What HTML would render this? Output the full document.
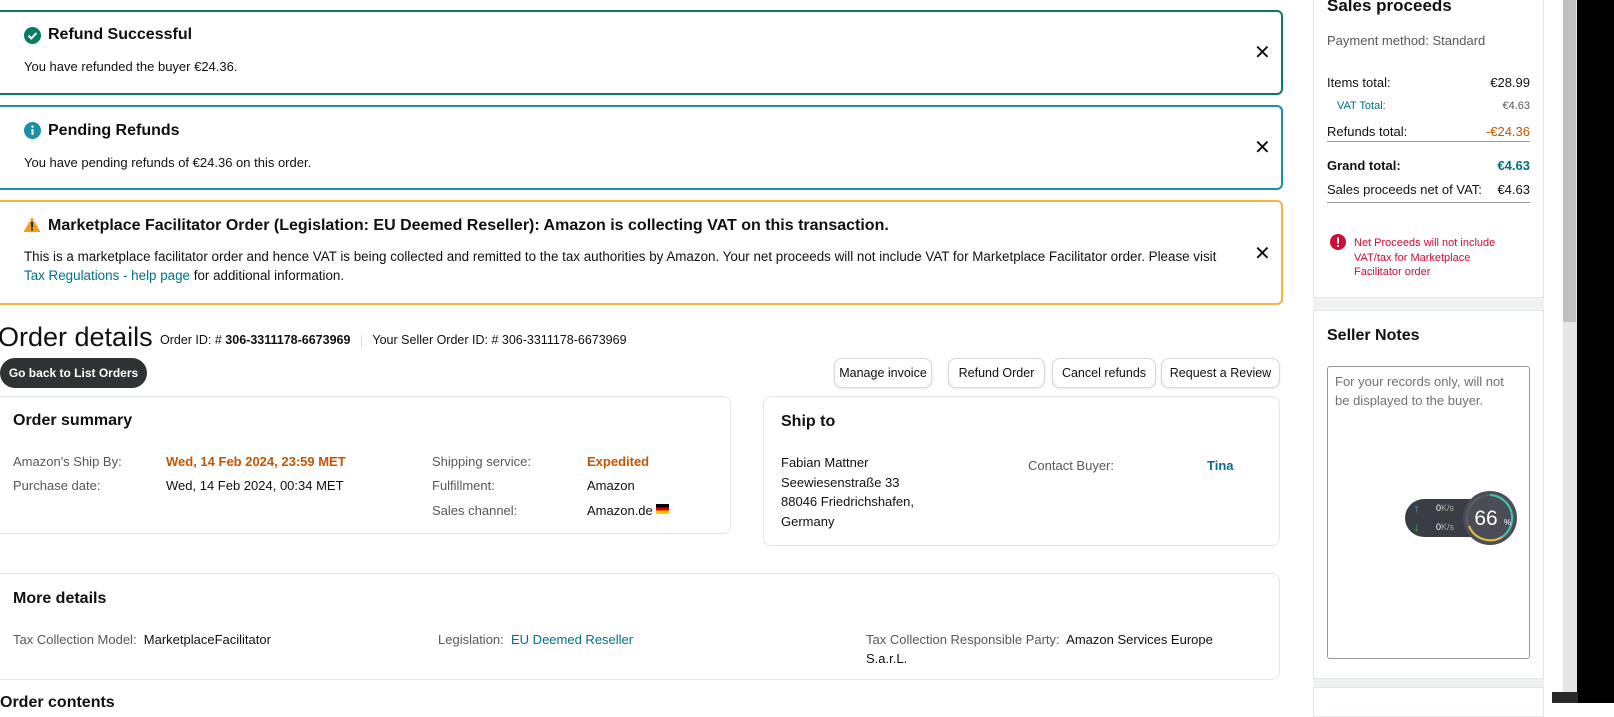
<!DOCTYPE html>
<html><head><meta charset="utf-8"><style>
*{box-sizing:border-box;margin:0;padding:0}
body{width:1614px;height:703px;overflow:hidden;background:#fff;font-family:"Liberation Sans",Arial,sans-serif;color:#0f1111;position:relative;font-size:13px}
.a{position:absolute;white-space:nowrap}
.ban{position:absolute;left:-8px;width:1291px;border:2px solid;border-left-width:8px;border-radius:6px;background:#fff}
.t{font-weight:bold;font-size:16px}
.x{position:absolute;font-size:20px;color:#0f1111}
.card{position:absolute;border:1px solid #e3e6e6;border-radius:8px;background:#fff}
.lbl{color:#565959}
.btn{position:absolute;top:358px;height:30px;border:1px solid #d5d9d9;border-radius:8px;background:#fff;font-size:12.5px;display:flex;align-items:center;justify-content:center;box-shadow:0 1px 2px rgba(15,17,17,.1)}
.teal{color:#007185}
</style></head><body>

<div class="ban" style="top:10px;height:85px;border-color:#067d62"></div>
<svg class="a" style="left:24px;top:27px" width="17" height="17" viewBox="0 0 17 17"><circle cx="8.5" cy="8.5" r="8.5" fill="#067d62"/><path d="M4.5 8.7l2.8 2.7 5.2-5.4" stroke="#fff" stroke-width="2" fill="none"/></svg>
<div class="a t" style="left:48px;top:26px">Refund Successful</div>
<div class="a" style="left:24px;top:59px">You have refunded the buyer €24.36.</div>
<div class="x a" style="left:1254px;top:40px">✕</div>

<div class="ban" style="top:105px;height:85px;border-color:#1c8ea6"></div>
<svg class="a" style="left:24px;top:122px" width="17" height="17" viewBox="0 0 17 17"><circle cx="8.5" cy="8.5" r="8.5" fill="#1c8ea6"/><rect x="7.5" y="7" width="2" height="6" fill="#fff"/><circle cx="8.5" cy="4.6" r="1.2" fill="#fff"/></svg>
<div class="a t" style="left:48px;top:122px">Pending Refunds</div>
<div class="a" style="left:24px;top:155px">You have pending refunds of €24.36 on this order.</div>
<div class="x a" style="left:1254px;top:135px">✕</div>

<div class="ban" style="top:200px;height:105px;border-color:#f9b340"></div>
<svg class="a" style="left:23px;top:216px" width="18" height="17" viewBox="0 0 18 17"><path d="M9 1L17.5 16H.5z" fill="#f0a020"/><rect x="8.1" y="6" width="1.8" height="5.5" fill="#111"/><rect x="8.1" y="12.6" width="1.8" height="1.8" fill="#111"/></svg>
<div class="a t" style="left:48px;top:217px">Marketplace Facilitator Order (Legislation: EU Deemed Reseller): Amazon is collecting VAT on this transaction.</div>
<div class="a" style="left:24px;top:249px;font-size:13.4px">This is a marketplace facilitator order and hence VAT is being collected and remitted to the tax authorities by Amazon. Your net proceeds will not include VAT for Marketplace Facilitator order. Please visit</div>
<div class="a" style="left:24px;top:268px;font-size:13.4px"><span class="teal">Tax Regulations - help page</span> for additional information.</div>
<div class="x a" style="left:1254px;top:241px">✕</div>

<div class="a" style="left:-2px;top:322px;font-size:27px">Order details</div>
<div class="a" style="left:160px;top:333px;font-size:12.5px">Order ID: # <b>306-3311178-6673969</b> <span style="color:#d5d9d9;margin:0 6px">|</span> Your Seller Order ID: # 306-3311178-6673969</div>
<div class="a" style="left:0;top:358px;width:147px;height:30px;background:#303333;color:#fff;border-radius:15px;font-weight:bold;font-size:12px;display:flex;align-items:center;justify-content:center">Go back to List Orders</div>
<div class="btn" style="left:834px;width:98px">Manage invoice</div>
<div class="btn" style="left:948px;width:97px">Refund Order</div>
<div class="btn" style="left:1052px;width:104px">Cancel refunds</div>
<div class="btn" style="left:1161px;width:119px">Request a Review</div>

<div class="card" style="left:-8px;top:396px;width:739px;height:138px"></div>
<div class="a t" style="left:13px;top:412px">Order summary</div>
<div class="a lbl" style="left:13px;top:454px">Amazon's Ship By:</div>
<div class="a" style="left:166px;top:454px;color:#c45500;font-weight:bold">Wed, 14 Feb 2024, 23:59 MET</div>
<div class="a lbl" style="left:13px;top:478px">Purchase date:</div>
<div class="a" style="left:166px;top:478px">Wed, 14 Feb 2024, 00:34 MET</div>
<div class="a lbl" style="left:432px;top:454px">Shipping service:</div>
<div class="a" style="left:587px;top:454px;color:#c45500;font-weight:bold">Expedited</div>
<div class="a lbl" style="left:432px;top:478px">Fulfillment:</div>
<div class="a" style="left:587px;top:478px">Amazon</div>
<div class="a lbl" style="left:432px;top:503px">Sales channel:</div>
<div class="a" style="left:587px;top:503px">Amazon.de <span style="display:inline-block;width:13px;height:10px;background:linear-gradient(#000 33%,#d00 33% 66%,#fc0 66%);vertical-align:1px"></span></div>

<div class="card" style="left:763px;top:396px;width:517px;height:150px"></div>
<div class="a t" style="left:781px;top:413px">Ship to</div>
<div class="a" style="left:781px;top:453px;line-height:19.5px">Fabian Mattner<br>Seewiesenstraße 33<br>88046 Friedrichshafen,<br>Germany</div>
<div class="a lbl" style="left:1028px;top:458px">Contact Buyer:</div>
<div class="a teal" style="left:1207px;top:458px;font-weight:bold">Tina</div>

<div class="card" style="left:-8px;top:573px;width:1288px;height:107px"></div>
<div class="a t" style="left:13px;top:590px">More details</div>
<div class="a" style="left:13px;top:632px"><span class="lbl">Tax Collection Model:</span>&nbsp; MarketplaceFacilitator</div>
<div class="a" style="left:438px;top:632px"><span class="lbl">Legislation:</span>&nbsp; <span class="teal">EU Deemed Reseller</span></div>
<div class="a" style="left:866px;top:632px"><span class="lbl">Tax Collection Responsible Party:</span>&nbsp; Amazon Services Europe</div>
<div class="a" style="left:866px;top:651px">S.a.r.L.</div>
<div class="a t" style="left:0;top:694px">Order contents</div>

<!-- right panel -->
<div class="a" style="left:1313px;top:-5px;width:231px;height:303px;border:1px solid #e3e6e6;background:#fff"></div>
<div class="a" style="left:1313px;top:298px;width:231px;height:12px;background:#f0f2f2"></div>
<div class="a" style="left:1313px;top:310px;width:231px;height:369px;border:1px solid #e3e6e6;background:#fff"></div>
<div class="a" style="left:1313px;top:679px;width:231px;height:8px;background:#f0f2f2"></div>
<div class="a" style="left:1313px;top:687px;width:231px;height:30px;border:1px solid #e3e6e6"></div>
<div class="a t" style="left:1327px;top:-4px;font-size:17px">Sales proceeds</div>
<div class="a lbl" style="left:1327px;top:33px">Payment method: Standard</div>
<div class="a" style="left:1327px;top:75px">Items total:</div><div class="a" style="right:84px;top:75px">€28.99</div>
<div class="a teal" style="left:1337px;top:100px;font-size:11px">VAT Total:</div><div class="a lbl" style="right:84px;top:100px;font-size:11px">€4.63</div>
<div class="a" style="left:1327px;top:124px">Refunds total:</div><div class="a" style="right:84px;top:124px;color:#c45500">-€24.36</div>
<div class="a" style="left:1327px;top:141px;width:203px;border-top:1px solid #999"></div>
<div class="a" style="left:1327px;top:158px;font-weight:bold">Grand total:</div><div class="a teal" style="right:84px;top:158px;font-weight:bold">€4.63</div>
<div class="a" style="left:1327px;top:182px">Sales proceeds net of VAT:</div><div class="a" style="right:84px;top:182px">€4.63</div>
<div class="a" style="left:1327px;top:202px;width:203px;border-top:1px solid #999"></div>
<svg class="a" style="left:1330px;top:234px" width="16" height="16" viewBox="0 0 16 16"><circle cx="8" cy="8" r="8" fill="#cc0c39"/><rect x="7" y="3.5" width="2" height="6" fill="#fff"/><rect x="7" y="11" width="2" height="2" fill="#fff"/></svg>
<div class="a" style="left:1354px;top:236px;color:#cc0c39;font-size:11px;line-height:14.5px">Net Proceeds will not include<br>VAT/tax for Marketplace<br>Facilitator order</div>

<div class="a t" style="left:1327px;top:327px">Seller Notes</div>
<div class="a" style="left:1327px;top:366px;width:203px;height:293px;border:1px solid #999;border-radius:3px;background:#fff"></div>
<div class="a lbl" style="left:1335px;top:372px;line-height:19px;color:#6f7373">For your records only, will not<br>be displayed to the buyer.</div>

<div class="a" style="left:1405px;top:499px;width:90px;height:38px;border-radius:19px;background:#3a3d44"></div>
<div class="a" style="left:1414px;top:502px;color:#3aa0e0;font-size:9px">🡑</div>
<div class="a" style="left:1414px;top:521px;color:#2ec040;font-size:9px">🡓</div>
<div class="a" style="left:1436px;top:503px;color:#fff;font-size:9px">0<span style="color:#aaa">K/s</span></div>
<div class="a" style="left:1436px;top:522px;color:#fff;font-size:9px">0<span style="color:#aaa">K/s</span></div>
<svg class="a" style="left:1462px;top:490px" width="56" height="56" viewBox="0 0 56 56"><circle cx="28" cy="28" r="27" fill="#4a4d55"/><circle cx="28" cy="28" r="23" fill="none" stroke="#5a5d66" stroke-width="2"/><path d="M28 5A23 23 0 0 1 40 47" stroke="#3cc7b0" stroke-width="2" fill="none"/><path d="M40 47A23 23 0 0 1 7 36" stroke="#e0c040" stroke-width="2" fill="none"/><text x="24" y="35" fill="#fff" font-size="21" text-anchor="middle" font-family="Liberation Sans">66</text><text x="42" y="35" fill="#fff" font-size="8" font-family="Liberation Sans">%</text></svg>

<div class="a" style="left:1563px;top:0;width:14px;height:703px;background:#e6e6e6"></div>
<div class="a" style="left:1563px;top:0;width:13px;height:322px;background:#c1c1c1"></div>
<div class="a" style="left:1577px;top:0;width:37px;height:703px;background:#000"></div>
<div class="a" style="left:1552px;top:692px;width:26px;height:11px;background:#2a2a2a"></div>
</body></html>
